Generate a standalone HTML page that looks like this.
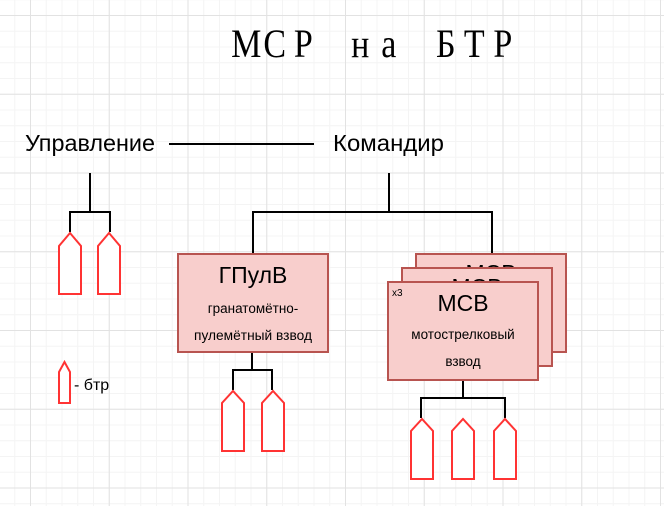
<!DOCTYPE html>
<html><head><meta charset="utf-8"><style>
html,body{margin:0;padding:0;background:#fff;}
svg{display:block}
text{font-family:"Liberation Sans","Noto Sans CJK SC",sans-serif;fill:#000}
.ser{font-family:"Liberation Serif","DejaVu Serif",serif}
</style></head><body>
<svg width="664" height="506" viewBox="0 0 664 506" xmlns="http://www.w3.org/2000/svg">
<defs>
<pattern id="minor" x="30" y="15" width="15.75" height="15.75" patternUnits="userSpaceOnUse">
<path d="M0 0.5H15.75M0.5 0V15.75" stroke="#f4f4f4" stroke-width="1" fill="none"/>
</pattern>
<pattern id="major" x="30" y="15" width="78.75" height="78.75" patternUnits="userSpaceOnUse">
<path d="M0 0.5H78.75M0.5 0V78.75" stroke="#e2e2e2" stroke-width="1" fill="none"/>
</pattern>
</defs>
<rect width="664" height="506" fill="#fff"/>
<rect width="664" height="506" fill="url(#minor)"/>
<rect width="664" height="506" fill="url(#major)"/>

<g transform="translate(0,57) scale(0.85,1)">
<text class="ser" font-size="40" y="0" text-anchor="middle" x="289.7 323.2 356.8 390.3 423.8 457.4 490.9 524.4 557.9 591.5">МСР на БТР</text>
</g>

<text x="25" y="151" font-size="23" textLength="130" lengthAdjust="spacingAndGlyphs">Управление</text>
<line x1="169" y1="144" x2="314" y2="144" stroke="#000" stroke-width="2"/>
<text x="333" y="151" font-size="23" textLength="111" lengthAdjust="spacingAndGlyphs">Командир</text>

<g stroke="#000" stroke-width="2" fill="none">
<path d="M90 173V212M70 232V212H110V232"/>
<path d="M389 173V212M253 253V212H492V253"/>
<path d="M252 352V370M233 390V370H272V390"/>
<path d="M463 380V398M421 418V398H505V418"/>
</g>

<g stroke="#ff3333" stroke-width="2" fill="#fff">
<path d="M59 294V246L70 233L81 246V294Z"/>
<path d="M98 294V246L109 233L120 246V294Z"/>
<path d="M222 451V403L233 391L244 403V451Z"/>
<path d="M262 451V403L273 391L284 403V451Z"/>
<path d="M411 479V431L422 419L433 431V479Z"/>
<path d="M452 479V431L463 419L474 431V479Z"/>
<path d="M494 479V431L505 419L516 431V479Z"/>
<path d="M59 403V372L64.5 362L70 372V403Z"/>
</g>
<text x="74" y="390" font-size="16">- бтр</text>

<g fill="#f8cecc" stroke="#b85450" stroke-width="2">
<rect x="178" y="254" width="150" height="98"/>
<rect x="416" y="254" width="150" height="98"/>
</g>
<text x="491" y="281" font-size="23" text-anchor="middle">МСВ</text>
<rect x="402" y="268" width="150" height="98" fill="#f8cecc" stroke="#b85450" stroke-width="2"/>
<text x="477" y="295" font-size="23" text-anchor="middle">МСВ</text>
<rect x="388" y="282" width="150" height="98" fill="#f8cecc" stroke="#b85450" stroke-width="2"/>

<text x="253" y="283" font-size="23" text-anchor="middle">ГПулВ</text>
<text x="253" y="313" font-size="13.5" text-anchor="middle">гранатомётно-</text>
<text x="253" y="340" font-size="13.5" text-anchor="middle" textLength="118" lengthAdjust="spacingAndGlyphs">пулемётный взвод</text>

<text x="392" y="296" font-size="10">x3</text>
<text x="463" y="311" font-size="23" text-anchor="middle">МСВ</text>
<text x="463" y="339" font-size="13.5" text-anchor="middle">мотострелковый</text>
<text x="463" y="366" font-size="13.5" text-anchor="middle">взвод</text>
</svg>
</body></html>
